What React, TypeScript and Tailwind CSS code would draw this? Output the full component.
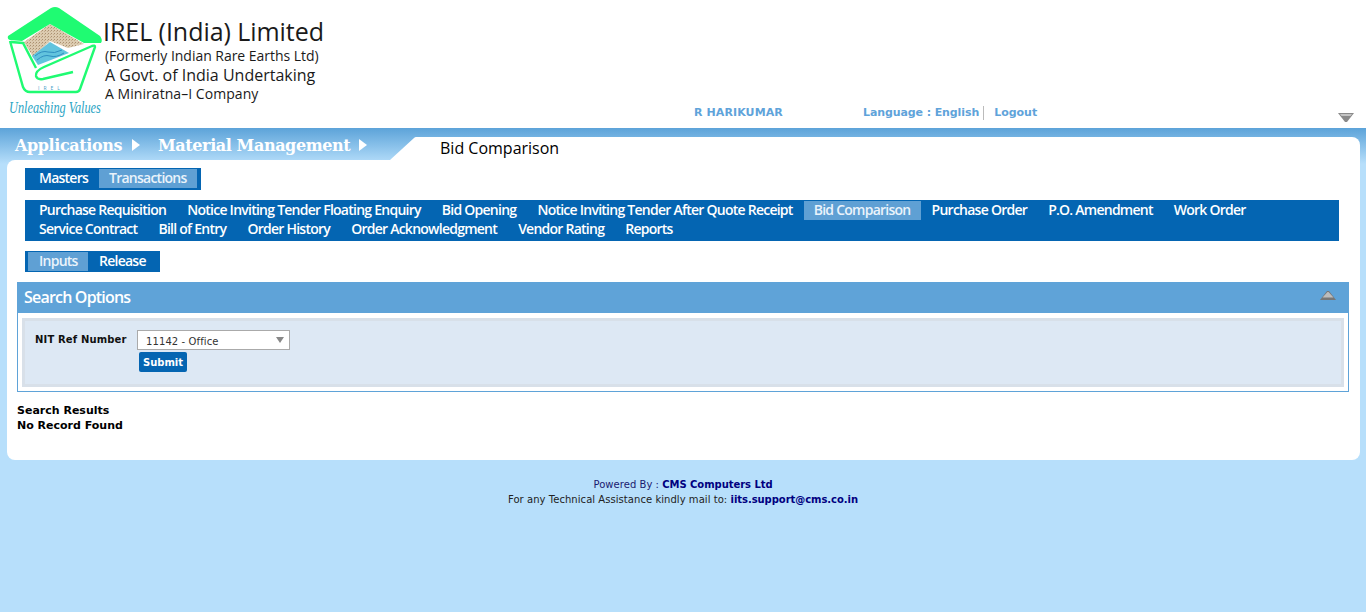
import React from "react";

const menuRows = [
  [
    "Purchase Requisition",
    "Notice Inviting Tender Floating Enquiry",
    "Bid Opening",
    "Notice Inviting Tender After Quote Receipt",
    "Bid Comparison",
    "Purchase Order",
    "P.O. Amendment",
    "Work Order",
  ],
  ["Service Contract", "Bill of Entry", "Order History", "Order Acknowledgment", "Vendor Rating", "Reports"],
];

function Logo() {
  return (
    <svg width="103" height="122" viewBox="0 0 103 122" className="shrink-0">
      <defs>
        <pattern id="sand" width="3" height="3" patternUnits="userSpaceOnUse">
          <rect width="3" height="3" fill="#dccbb0" />
          <rect width="1" height="1" fill="#a98f70" />
          <rect x="2" y="1" width="1" height="1" fill="#c4ab8a" />
        </pattern>
      </defs>
      {/* sand */}
      <path d="M24 42 L50 24 L84 44 L68 48 L50 41 L33 57 Z" fill="url(#sand)" />
      {/* water */}
      <path d="M32 56 L50 42 L69 53 L38 65 Z" fill="#62c4de" />
      <path d="M35 56 Q42 50 48 52 T62 50 M37 60 Q44 54 50 56 T64 53" stroke="#2f8fc0" strokeWidth="1" fill="none" />
      {/* roof */}
      <path
        d="M8 36 L51 8 Q55 6 59 8 L100 36 Q103 40 101 43 L84 43 L50 24 L22 41 L10 40 Q7 39 8 36 Z"
        fill="#1ffb72"
      />
      {/* basket */}
      <path
        d="M10 41 L23 87 Q25 92 30 92 L76 92 Q79 92 80 89 L95 47 Q95 45 92 46 L44 67 Q35 71 36 76 Q37 80 43 79 L73 72"
        stroke="#1ffb72"
        strokeWidth="2.4"
        fill="none"
      />
      <path d="M11 42 L23 43 L36 68" stroke="#1ffb72" strokeWidth="2.4" fill="none" />
      <text x="38" y="90" fontSize="5" letterSpacing="4" fill="#4aa0c8" fontFamily="'Open Sans', sans-serif">
        IREL
      </text>
      <text
        transform="translate(9 113) scale(1 1.4)"
        fontSize="12.3"
        fontStyle="italic"
        fill="#2aa4c4"
        fontFamily="'Liberation Serif', serif"
      >
        Unleashing Values
      </text>
    </svg>
  );
}

export default function App() {
  return (
    <div className="min-h-[612px] bg-[#b7dffb] font-['DejaVu_Sans',sans-serif] text-[11px] text-black">
      {/* Header */}
      <header className="h-[128px] bg-white flex relative">
        <Logo />
        <div className="pt-[14px] font-['Open_Sans',sans-serif] text-[#1a1a1a]">
          <div className="text-[25px] leading-[34px] tracking-[-0.05px]">IREL (India) Limited</div>
          <div className="text-[14px] leading-[16px] pl-[2px] tracking-[-0.03px]">(Formerly Indian Rare Earths Ltd)</div>
          <div className="text-[16px] leading-[22px] pl-[2px]">A Govt. of India Undertaking</div>
          <div className="text-[14px] leading-[16px] pl-[2px] tracking-[0.05px]">A Miniratna–I Company</div>
        </div>
        <div className="absolute left-[694px] top-[106px] flex items-center font-bold text-[11px] leading-[14px] text-[#5fa3da]">
          <span className="w-[169px] tracking-[0.1px]">R HARIKUMAR</span>
          <span className="pr-[4px] border-r border-[#bbb] tracking-[-0.1px]">Language : English</span>
          <span className="pl-[10px]">Logout</span>
        </div>
        <svg width="16" height="11" viewBox="0 0 16 11" className="absolute left-[1338px] top-[112px]">
          <path d="M0 1 H16 L9 10 H7 Z" fill="#8a8a8a" />
          <path d="M2 2 H14 L12.5 4 H3.5 Z" fill="#c4c4c4" />
        </svg>
      </header>

      <main className="bg-[linear-gradient(#5ca3d9,#b7dffb)] bg-no-repeat bg-[length:100%_36px]">
        {/* Breadcrumb row */}
        <div className="flex h-[32px] pl-[7px] pr-[6px]">
          <div className="w-[375px] flex items-center pl-[8px] pt-[4px] font-['DejaVu_Serif',serif] font-bold text-[16px] tracking-[-0.4px] text-white">
            <span>Applications</span>
            <span className="ml-[10px] mb-[3px] w-0 h-0 border-y-[6px] border-y-transparent border-l-[8px] border-l-white" />
            <span className="ml-[18px]">Material Management</span>
            <span className="ml-[9px] mb-[3px] w-0 h-0 border-y-[6px] border-y-transparent border-l-[8px] border-l-white" />
          </div>
          <svg width="34" height="32" viewBox="0 0 34 32" className="shrink-0">
            <path d="M8 32 L32 10 Q33 9 34 9 L34 32 Z" fill="#fff" />
          </svg>
          <div className="flex-1 mt-[9px] bg-white rounded-tr-[8px] pl-[24px] font-['Open_Sans',sans-serif] font-medium text-[16px] leading-[22px]">
            Bid Comparison
          </div>
        </div>

        {/* Card */}
        <div className="ml-[7px] mr-[6px] h-[300px] bg-white rounded-b-[8px] rounded-tl-[8px] pt-[8px] pl-[10px] pr-[11px]">
          <div className="font-['Open_Sans',sans-serif] font-semibold text-[14px] tracking-[-0.75px] text-white">
            <div className="ml-[8px] w-[176px] bg-[#0465b2] h-[22px] flex items-start pl-[4px] pt-[1px]">
              <span className="pl-[10px] w-[70px] h-[19px] leading-[18px]">Masters</span>
              <span className="pl-[10px] w-[98px] h-[19px] leading-[18px] bg-[#5fa0d4] text-[#eaf3fb]">Transactions</span>
            </div>

            <div className="ml-[8px] mt-[10px] w-[1314px] h-[41px] bg-[#0465b2] pl-[4px] pt-[1px]">
              {menuRows.map((row, i) => (
                <div key={i} className="flex h-[19px] leading-[18px]">
                  {row.map((item) => (
                    <span
                      key={item}
                      className={`px-[10px] mr-[1.1px] ${item === "Bid Comparison" ? "bg-[#5fa0d4] text-[#eaf3fb]" : ""}`}
                    >
                      {item}
                    </span>
                  ))}
                </div>
              ))}
            </div>

            <div className="ml-[8px] mt-[10px] w-[135px] bg-[#0465b2] h-[21px] flex pl-[3px] pt-[1px]">
              <span className="pl-[11px] w-[60px] h-[19px] leading-[18px] bg-[#5fa0d4] text-[#eaf3fb]">Inputs</span>
              <span className="pl-[11px] h-[19px] leading-[18px]">Release</span>
            </div>
          </div>

          {/* Search options */}
          <section className="mt-[10px] border border-[#5fa3d8] border-t-0 h-[110px]">
            <div className="h-[31px] bg-[#5fa3d8] flex items-center justify-between pl-[6px] pr-[12px] pb-[1px] font-['Open_Sans',sans-serif] font-semibold text-[16px] tracking-[-0.8px] text-white">
              <span>Search Options</span>
              <svg width="16" height="11" viewBox="0 0 16 11" className="mb-[3px]">
                <path d="M0 10 L7 1 H9 L16 10 Z" fill="#777" />
                <path d="M2.5 7.5 L7.5 2 H8.5 L13.5 7.5 Z" fill="#bdbdbd" />
              </svg>
            </div>
            <div className="mx-[4px] mt-[5px] h-[69px] bg-[#dde8f4] border-[3px] border-[#d8e0e9] pl-[10px] pt-[9px] flex">
              <label className="w-[102px] pt-[3px] font-bold text-[10px] tracking-[0.15px] leading-[14px] text-[#101010]">
                NIT Ref Number
              </label>
              <div>
                <div className="w-[153px] h-[20px] bg-white border border-[#aaa] flex items-center justify-between pl-[8px] pr-[5px] text-[10px] tracking-[0.1px] text-[#333]">
                  <span className="pt-[2px]">11142 - Office</span>
                  <span className="w-0 h-0 border-x-[4px] border-x-transparent border-t-[6px] border-t-[#888]" />
                </div>
                <button className="ml-[2px] mt-[2px] w-[48px] h-[20px] rounded-[2px] bg-[#0465b2] text-white font-bold text-[10px] flex items-center justify-center">
                  Submit
                </button>
              </div>
            </div>
          </section>

          <div className="mt-[11px] font-bold text-[11px] leading-[15px]">
            <div>Search Results</div>
            <div>No Record Found</div>
          </div>
        </div>

        {/* Footer */}
        <footer className="pt-[17px] text-center text-[10px] leading-[15px] text-[#222] tracking-[0.05px]">
          <div className="text-[#1a1a70]">
            Powered By : <span className="font-bold text-[#000080] tracking-[-0.05px]">CMS Computers Ltd</span>
          </div>
          <div>
            For any Technical Assistance kindly mail to: <span className="font-bold text-[#000080] tracking-[-0.05px]">iits.support@cms.co.in</span>
          </div>
        </footer>
      </main>
    </div>
  );
}
